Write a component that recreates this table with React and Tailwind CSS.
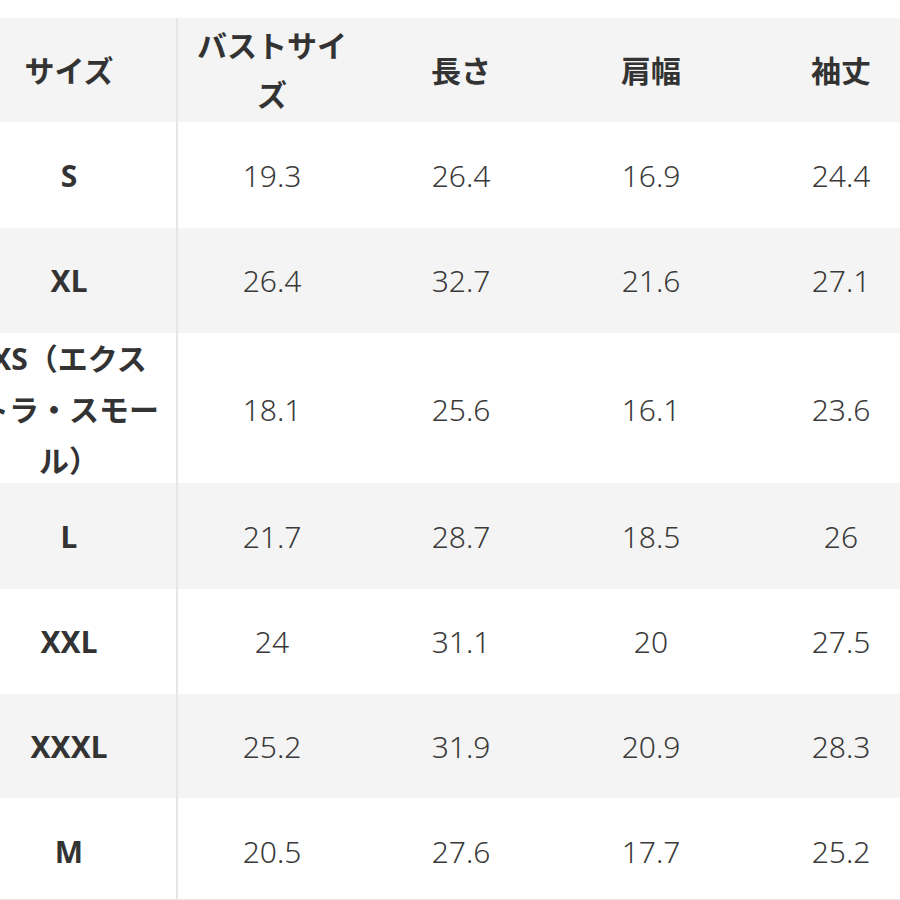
import React from 'react';

const headers = [
  'サイズ',
  <>バストサイ<br />ズ</>,
  '長さ',
  '肩幅',
  '袖丈',
];

const rows = [
  { size: 'S', vals: ['19.3', '26.4', '16.9', '24.4'], h: 'h-[106px]', pad: '' },
  { size: 'XL', vals: ['26.4', '32.7', '21.6', '27.1'], h: 'h-[105px]', pad: '' },
  { size: <>XS（エクス<br />トラ・スモー<br />ル）</>, vals: ['18.1', '25.6', '16.1', '23.6'], h: 'h-[150px]', pad: '' },
  { size: 'L', vals: ['21.7', '28.7', '18.5', '26'], h: 'h-[106px]', pad: '' },
  { size: 'XXL', vals: ['24', '31.1', '20', '27.5'], h: 'h-[105px]', pad: '' },
  { size: 'XXXL', vals: ['25.2', '31.9', '20.9', '28.3'], h: 'h-[104px]', pad: '' },
  { size: 'M', vals: ['20.5', '27.6', '17.7', '25.2'], h: 'h-[101px]', pad: 'pt-[6px]' },
];

const cols = 'grid grid-cols-[216px_188px_190px_190px_190px]';

const App = () => {
  return (
    <div
      className="w-[900px] h-[900px] overflow-hidden bg-white text-[#333] text-[30px]"
      style={{ fontFamily: '"Noto Sans", "Noto Sans CJK JP", sans-serif' }}
    >
      <div className="mt-[18px] -ml-[38px] w-[974px]">
        {/* header */}
        <div className={`${cols} h-[104px] bg-[#f4f4f4] font-bold`}>
          {headers.map((h, i) => (
            <div
              key={i}
              className={`flex items-center justify-center text-center leading-[49px] whitespace-nowrap ${
                i === 0 ? 'border-r-2 border-[#e6e6e6]' : ''
              }`}
            >
              {h}
            </div>
          ))}
        </div>

        {rows.map((r, idx) => (
          <div
            key={idx}
            className={`${cols} ${r.h} ${idx % 2 === 1 ? 'bg-[#f4f4f4]' : 'bg-white'}`}
          >
            <div className={`flex items-center justify-center text-center font-bold leading-[51px] whitespace-nowrap border-r-2 border-[#e6e6e6] ${r.pad}`}>
              {r.size}
            </div>
            {r.vals.map((v, j) => (
              <div key={j} className={`flex items-center justify-center font-light text-[#3a3a3a] ${r.pad}`}>
                {v}
              </div>
            ))}
          </div>
        ))}
        <div className="h-[2px] bg-[#e6e6e6]" />
      </div>
    </div>
  );
};

export default App;
